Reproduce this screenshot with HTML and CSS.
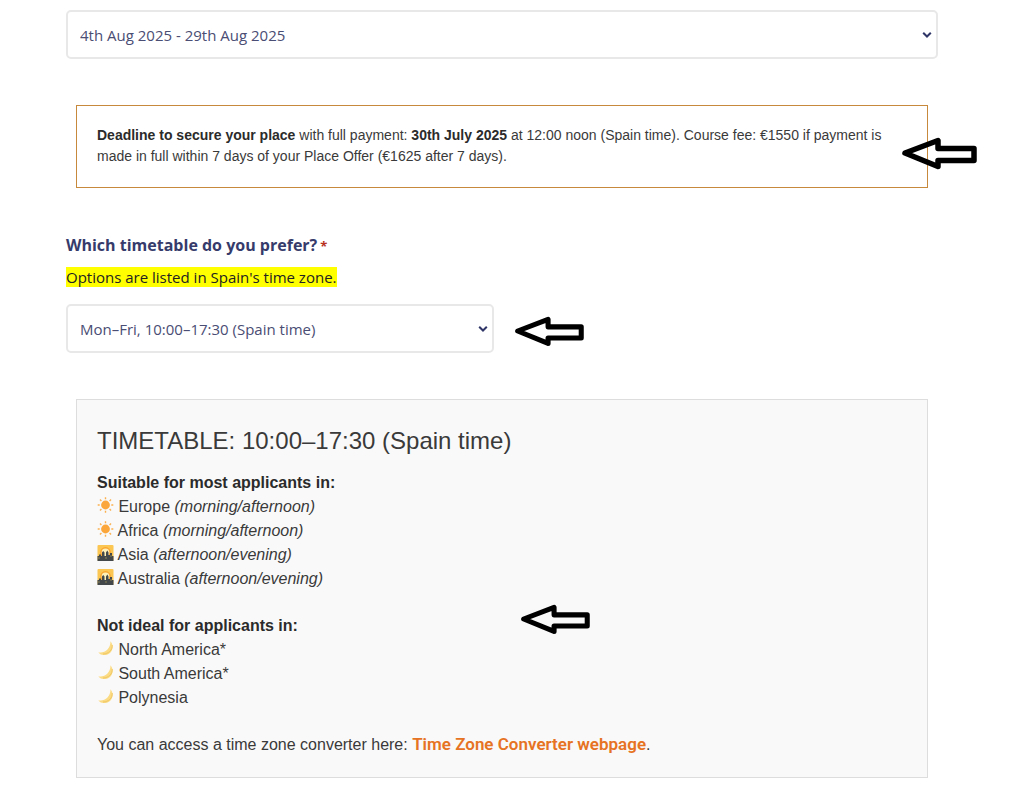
FILE: index.html
```html
<!DOCTYPE html>
<html lang="en">
<head>
<meta charset="utf-8">
<meta name="viewport" content="width=device-width, initial-scale=1">
<title>Course dates and timetable</title>
<link rel="stylesheet" href="styles.css">
</head>
<body>
<svg class="defs" aria-hidden="true">
  <symbol id="arrow" viewBox="0 0 76 34">
    <path d="M4 17 37 4.500v8h36v12H37v6z" fill="none" stroke="#000" stroke-width="5.500" stroke-linejoin="round"/>
  </symbol>
  <symbol id="chevron" viewBox="0 0 10 8">
    <path d="M1.200 1.700 5 5.500 8.800 1.700" fill="none" stroke="#2f3566" stroke-width="2"/>
  </symbol>
  <symbol id="sun" viewBox="0 0 16 16">
    <circle cx="8" cy="8" r="4.400" fill="#fba63a"/>
    <path d="M8 .2v2M8 13.800v2M.2 8h2M13.800 8h2M2.500 2.500l1.400 1.400M12.100 12.100l1.400 1.400M2.500 13.500l1.400-1.400M12.100 3.900l1.400-1.400" stroke="#fbb04e" stroke-width="1.400"/>
  </symbol>
  <symbol id="city" viewBox="0 0 16 16">
    <rect width="16" height="16" rx="1" fill="#fcc653"/>
    <circle cx="8" cy="7.500" r="5.400" fill="#f9a52f"/>
    <circle cx="8" cy="7.500" r="3.900" fill="#fff0b8"/>
    <path d="M0 16v-5h1.500V9.500h2V11h1V7.500L5.700 6 7 7.500V11h1.500V7.500L9.800 5.500 11 7.500V10h1.500V8h2v3H16v5z" fill="#43484a"/>
    <path d="M1 12h1v2H1zM8 12h1v2H8zM13 10h1v2h-1z" fill="#8d8152"/>
  </symbol>
  <symbol id="moon" viewBox="0 0 16 16">
    <path d="M13 1.200C18 7.500 13.500 15.500 6 15 3.500 14.800 1.800 13.800.8 12.200 7 13.500 13 9 13 1.200z" fill="#fbdc85"/>
    <path d="M14.700 5C15 10 11.500 13.800 5.500 14" fill="none" stroke="#f1c765" stroke-width="1"/>
  </symbol>
</svg>

<form class="form">
  <div class="select-wrap">
    <select class="select" aria-label="Course dates">
      <option>4th Aug 2025 - 29th Aug 2025</option>
    </select>
    <svg class="chevron" aria-hidden="true"><use href="#chevron"/></svg>
  </div>

  <section class="notice">
    <p class="notice-text"><strong>Deadline to secure your place</strong> with full payment: <strong>30th July 2025</strong> at 12:00 noon (Spain time). Course fee: €1550 if payment is made in full within 7 days of your Place Offer (€1625 after 7 days).</p>
    <svg class="arrow arrow-notice" aria-hidden="true"><use href="#arrow"/></svg>
  </section>

  <div class="field">
    <label class="label" for="timetable">Which timetable do you prefer?<span class="required">*</span></label>
    <p class="hint"><mark class="mark">Options are listed in Spain's time zone.</mark></p>
    <div class="select-wrap half">
      <select class="select" id="timetable">
        <option>Mon–Fri, 10:00–17:30 (Spain time)</option>
      </select>
      <svg class="chevron" aria-hidden="true"><use href="#chevron"/></svg>
      <svg class="arrow arrow-select" aria-hidden="true"><use href="#arrow"/></svg>
    </div>
  </div>

  <section class="timetable">
    <h2 class="title">TIMETABLE: 10:00–17:30 (Spain time)</h2>
    <h3 class="subtitle">Suitable for most applicants in:</h3>
    <ul class="regions">
      <li><svg class="icon" aria-hidden="true"><use href="#sun"/></svg> Europe <em>(morning/afternoon)</em></li>
      <li><svg class="icon" aria-hidden="true"><use href="#sun"/></svg> Africa <em>(morning/afternoon)</em></li>
      <li><svg class="icon" aria-hidden="true"><use href="#city"/></svg> Asia <em>(afternoon/evening)</em></li>
      <li><svg class="icon" aria-hidden="true"><use href="#city"/></svg> Australia <em>(afternoon/evening)</em></li>
    </ul>
    <h3 class="subtitle">Not ideal for applicants in:</h3>
    <ul class="regions">
      <li><svg class="icon" aria-hidden="true"><use href="#moon"/></svg> North America*</li>
      <li><svg class="icon" aria-hidden="true"><use href="#moon"/></svg> South America*</li>
      <li><svg class="icon" aria-hidden="true"><use href="#moon"/></svg> Polynesia</li>
    </ul>
    <p class="converter">You can access a time zone converter here: <a class="link" href="#converter">Time Zone Converter webpage</a>.</p>
    <svg class="arrow arrow-timetable" aria-hidden="true"><use href="#arrow"/></svg>
  </section>
</form>
</body>
</html>
```
FILE: styles.css
```css
* {
  box-sizing: border-box;
}

body {
  margin: 0;
  background: #fff;
  color: #3a3a3a;
  font-family: "Liberation Sans", Arial, sans-serif;
  font-size: 16px;
  line-height: 24px;
}

h2,
h3,
p,
ul {
  margin: 0;
  padding: 0;
}

strong {
  color: #2b2b2b;
}

.defs {
  display: none;
}

.form {
  padding: 10px 86px 20px 66px;
}

.select-wrap {
  position: relative;
}

.half {
  width: 428px;
  max-width: 100%;
}

.select {
  display: block;
  width: 100%;
  height: 49px;
  padding: 0 12px;
  appearance: none;
  border: 2px solid #e8e8e8;
  border-radius: 5px;
  background: #fff;
  color: #4a4d74;
  font: 15px "Open Sans", sans-serif;
}

.chevron {
  position: absolute;
  top: 21px;
  right: 6px;
  width: 10px;
  height: 8px;
}

.notice {
  position: relative;
  margin: 46px 10px 0;
  padding: 19px 40px 20px 20px;
  border: 1px solid #c78a3c;
}

.notice-text {
  font-size: 14px;
  line-height: 21px;
}

.arrow {
  position: absolute;
  width: 76px;
  height: 34px;
}

.arrow-notice {
  top: 30px;
  right: -50px;
}

.arrow-select {
  top: 10px;
  left: calc(100% + 20px);
  width: 70px;
}

.arrow-timetable {
  top: 202px;
  left: 443px;
  width: 70px;
}

.field {
  margin-top: 45px;
  font-family: "Open Sans", sans-serif;
}

.label {
  display: block;
  color: #363b6b;
  font-size: 16px;
  font-weight: 700;
}

.required {
  margin-left: 3px;
  color: #b8321f;
  font-size: 13px;
}

.hint {
  margin: 7px 0 15px;
  font-size: 15px;
}

.mark {
  background: #ff0;
  color: #222;
}

.timetable {
  position: relative;
  margin: 46px 10px 0;
  padding: 23px 20px 20px;
  border: 1px solid #ddd;
  background: #f9f9f9;
}

.title {
  margin-bottom: 12px;
  font-size: 24px;
  font-weight: 400;
  line-height: 36px;
}

.subtitle {
  color: #2b2b2b;
  font-size: 16px;
  font-weight: 700;
}

.regions {
  margin-bottom: 23px;
  list-style: none;
}

.icon {
  width: 17px;
  height: 16px;
  vertical-align: -1px;
}

.link {
  color: #e67323;
  font-family: Roboto, sans-serif;
  font-size: 17px;
  font-weight: 600;
  line-height: 1;
  text-decoration: none;
}
```
